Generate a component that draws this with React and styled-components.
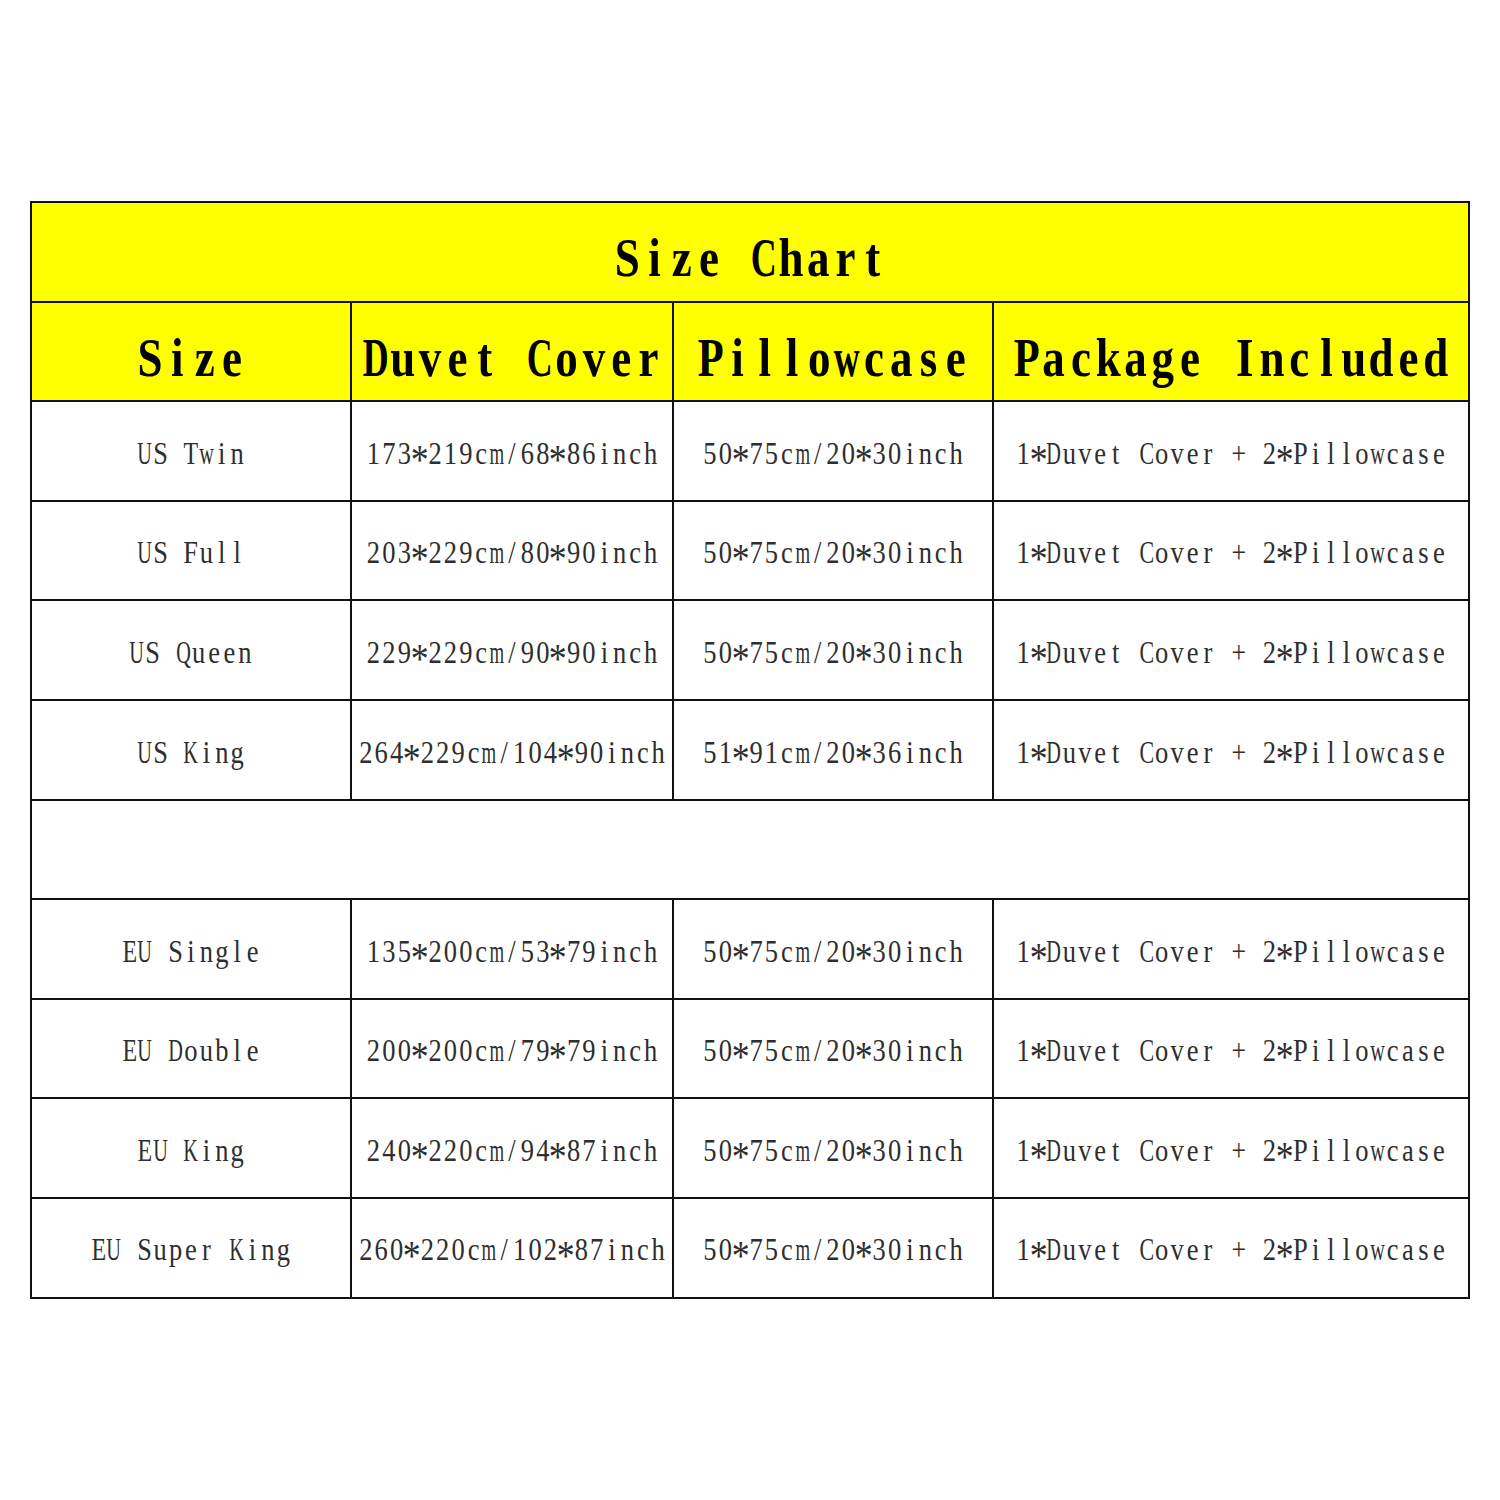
import React from "react";
import styled, { createGlobalStyle } from "styled-components";

const Global = createGlobalStyle`
  html, body { margin: 0; padding: 0; background: #fff; }
  body { width: 1500px; height: 1500px; font-family: "Liberation Serif", "Times New Roman", serif; }
`;

const Page = styled.div`
  padding: 201px 30px 0 30px;
`;

const Chart = styled.div`
  display: grid;
  grid-template-columns: 320px 322px 320px 476px;
  grid-auto-rows: 99.6px;
  width: 1440px;
  box-sizing: border-box;
  border-top: 2px solid #111;
  border-left: 2px solid #111;
`;

const Cell = styled.div`
  box-sizing: border-box;
  border-right: 2px solid #111;
  border-bottom: 2px solid #111;
  background: ${(p) => (p.$head ? "#ffff00" : "#fff")};
  grid-column: ${(p) => (p.$full ? "1 / -1" : "auto")};
  display: flex;
  align-items: center;
  justify-content: center;
  padding-top: ${(p) => (p.$head ? "14px" : "4px")};
  white-space: nowrap;
`;

const BODY_SIZE = 26.5;
const HEAD_SIZE = 45;
const BODY_CELL = 15.4;
const HEAD_CELL = 27.3;

const Text = styled.span`
  display: inline-flex;
  font-family: "Liberation Serif", "Times New Roman", serif;
  font-size: ${(p) => (p.$head ? HEAD_SIZE : BODY_SIZE)}px;
  font-weight: ${(p) => (p.$head ? 700 : 400)};
  color: ${(p) => (p.$head ? "#000" : "#2e2e2e")};
  line-height: 1;
  transform: scaleY(1.2);
`;

const Glyph = styled.span`
  display: inline-flex;
  justify-content: center;
  flex: none;
  width: ${(p) => (p.$head ? HEAD_CELL : BODY_CELL)}px;
  transform: ${(p) =>
    p.$star ? "translateY(0.22em) scale(1.35)" : `scaleX(${p.$sx})`};
`;

// advance widths (per 1000 em) of the wider glyphs in Liberation Serif
const REG = { C: 667, D: 722, E: 611, F: 556, K: 722, Q: 722, S: 556, T: 611, U: 722, m: 778, w: 722, "+": 564 };
const BOLD = { C: 722, D: 722, P: 611, S: 556, w: 722, h: 556, k: 556, n: 556, u: 556, d: 556 };

const squeeze = (c, head) => {
  const w = (head ? BOLD : REG)[c];
  if (!w) return 1;
  const cell = (head ? HEAD_CELL / HEAD_SIZE : BODY_CELL / BODY_SIZE) * 0.95;
  return Math.min(1, (cell * 1000) / w).toFixed(3);
};

const Mono = ({ children, $head }) => (
  <Text $head={$head}>
    {Array.from(children).map((c, i) => (
      <Glyph $head={$head} $star={c === "*"} $sx={squeeze(c, $head)} key={i}>
        {c === " " ? "\u00a0" : c}
      </Glyph>
    ))}
  </Text>
);

const headers = ["Size", "Duvet Cover", "Pillowcase", "Package Included"];
const pkg = "1*Duvet Cover + 2*Pillowcase";
const us = [
  ["US Twin", "173*219cm/68*86inch", "50*75cm/20*30inch"],
  ["US Full", "203*229cm/80*90inch", "50*75cm/20*30inch"],
  ["US Queen", "229*229cm/90*90inch", "50*75cm/20*30inch"],
  ["US King", "264*229cm/104*90inch", "51*91cm/20*36inch"],
];
const eu = [
  ["EU Single", "135*200cm/53*79inch", "50*75cm/20*30inch"],
  ["EU Double", "200*200cm/79*79inch", "50*75cm/20*30inch"],
  ["EU King", "240*220cm/94*87inch", "50*75cm/20*30inch"],
  ["EU Super King", "260*220cm/102*87inch", "50*75cm/20*30inch"],
];

const Row = ({ r }) => (
  <>
    {[...r, pkg].map((t, i) => (
      <Cell key={i}>
        <Mono>{t}</Mono>
      </Cell>
    ))}
  </>
);

export default function App() {
  return (
    <>
      <Global />
      <Page>
        <Chart>
          <Cell $head $full>
            <Mono $head>Size Chart</Mono>
          </Cell>
          {headers.map((h) => (
            <Cell $head key={h}>
              <Mono $head>{h}</Mono>
            </Cell>
          ))}
          {us.map((r) => (
            <Row key={r[0]} r={r} />
          ))}
          <Cell $full />
          {eu.map((r) => (
            <Row key={r[0]} r={r} />
          ))}
        </Chart>
      </Page>
    </>
  );
}
